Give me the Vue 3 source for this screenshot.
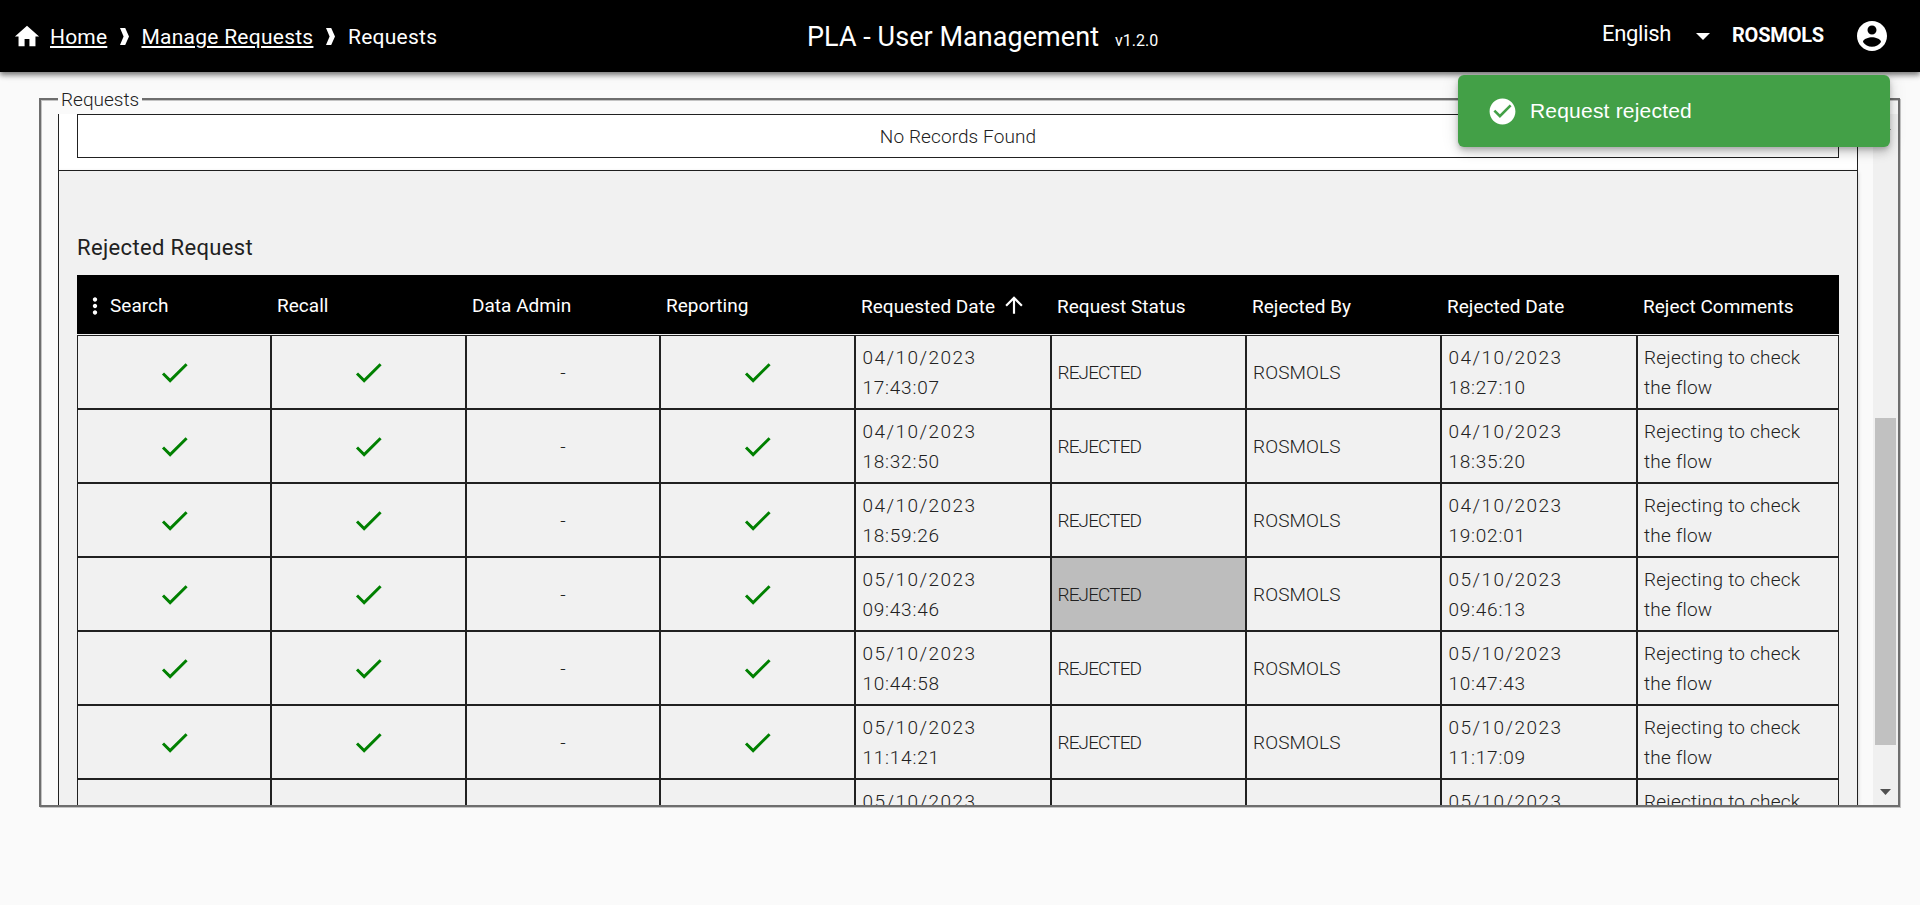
<script setup>
const columns = ['Search', 'Recall', 'Data Admin', 'Reporting', 'Requested Date', 'Request Status', 'Rejected By', 'Rejected Date', 'Reject Comments']
const rows = [
  ['04/10/2023', '17:43:07', '04/10/2023', '18:27:10'],
  ['04/10/2023', '18:32:50', '04/10/2023', '18:35:20'],
  ['04/10/2023', '18:59:26', '04/10/2023', '19:02:01'],
  ['05/10/2023', '09:43:46', '05/10/2023', '09:46:13'],
  ['05/10/2023', '10:44:58', '05/10/2023', '10:47:43'],
  ['05/10/2023', '11:14:21', '05/10/2023', '11:17:09'],
  ['05/10/2023', '11:20:35', '05/10/2023', '11:24:52'],
]
const access = [true, true, false, true]
const selectedRow = 3
</script>

<template>
  <div class="page">
    <header class="bar">
      <nav class="crumbs">
        <svg class="home" viewBox="0 0 24 24"><path d="M10 20v-6h4v6h5v-8h3L12 3 2 12h3v8z" /></svg>
        <a class="link first">Home</a>
        <svg class="sep" viewBox="0 0 9 17"><path d="M0 0h5.2L9 8.5 5.2 17H0l3.6-8.5z" /></svg>
        <a class="link second">Manage Requests</a>
        <svg class="sep" viewBox="0 0 9 17"><path d="M0 0h5.2L9 8.5 5.2 17H0l3.6-8.5z" /></svg>
        <span class="current">Requests</span>
      </nav>
      <div class="brand"><span class="title">PLA - User Management</span><span class="version">v1.2.0</span></div>
      <div class="account">
        <span class="lang">English</span>
        <svg class="caret" viewBox="0 0 14 7"><path d="M0 0h14L7 7z" /></svg>
        <span class="user">ROSMOLS</span>
        <svg class="avatar" viewBox="0 0 24 24"><path d="M12 2C6.48 2 2 6.48 2 12s4.48 10 10 10 10-4.48 10-10S17.52 2 12 2zm0 3c1.66 0 3 1.34 3 3s-1.34 3-3 3-3-1.34-3-3 1.34-3 3-3zm0 14.2c-2.5 0-4.71-1.28-6-3.22.03-1.99 4-3.08 6-3.08 1.99 0 5.97 1.09 6 3.08-1.29 1.94-3.5 3.22-6 3.22z" /></svg>
      </div>
    </header>

    <section class="frame">
      <span class="legend">Requests</span>
      <div class="content">
        <div class="panel empty">
          <div class="none"><span>No Records Found</span></div>
        </div>
        <div class="panel rejected">
          <h2>Rejected Request</h2>
          <div class="grid head">
            <div v-for="(c, i) in columns" :key="c" class="th" :class="{ low: i > 3 }">
              <svg v-if="i === 0" class="dots" viewBox="0 0 24 24"><path d="M12 8c1.1 0 2-.9 2-2s-.9-2-2-2-2 .9-2 2 .9 2 2 2zm0 2c-1.1 0-2 .9-2 2s.9 2 2 2 2-.9 2-2-.9-2-2-2zm0 6c-1.1 0-2 .9-2 2s.9 2 2 2 2-.9 2-2-.9-2-2-2z" /></svg>
              <span>{{ c }}</span>
              <svg v-if="i === 4" class="sort" viewBox="0 0 24 24"><path d="m4 12 1.41 1.41L11 7.83V20h2V7.83l5.58 5.59L20 12l-8-8-8 8z" /></svg>
            </div>
          </div>
          <div v-for="(r, n) in rows" :key="n" class="grid row">
            <div v-for="(a, i) in access" :key="i" class="td mid">
              <svg v-if="a" class="check" viewBox="0 0 24 24"><path d="M9 16.17 4.83 12l-1.42 1.41L9 19 21 7l-1.41-1.41z" /></svg>
              <span v-else class="dash">-</span>
            </div>
            <div class="td date"><span>{{ r[0] }}</span><span class="time">{{ r[1] }}</span></div>
            <div class="td status" :class="{ selected: n === selectedRow }"><span>REJECTED</span></div>
            <div class="td by"><span>ROSMOLS</span></div>
            <div class="td date"><span>{{ r[2] }}</span><span class="time">{{ r[3] }}</span></div>
            <div class="td note"><span>Rejecting to check</span><span>the flow</span></div>
          </div>
        </div>
      </div>
      <div class="track">
        <svg class="tri" viewBox="0 0 11 6"><path d="M0 6h11L5.5 0z" /></svg>
        <div class="thumb"></div>
        <svg class="tri" viewBox="0 0 11 6"><path d="M0 0h11L5.5 6z" /></svg>
      </div>
    </section>

    <div class="toast">
      <svg viewBox="0 0 24 24"><path d="M12 2C6.48 2 2 6.48 2 12s4.48 10 10 10 10-4.48 10-10S17.52 2 12 2zm-2 15-5-5 1.41-1.41L10 14.17l7.59-7.59L19 8l-9 9z" /></svg>
      <span>Request rejected</span>
    </div>
  </div>
</template>

<style>
body { background: #fafafa; overflow: hidden; }
</style>

<style scoped>
.page { position: relative; height: 905px; background: #fafafa; font-family: Roboto, "Liberation Sans", sans-serif; color: #212121; white-space: nowrap; }
.page * { box-sizing: border-box; }
svg { display: block; flex: none; fill: currentColor; }

.bar { position: relative; display: flex; align-items: center; justify-content: space-between; height: 72px; background: #000; color: #fff; box-shadow: 0 2px 4px -1px rgba(0,0,0,.2), 0 4px 5px rgba(0,0,0,.14), 0 1px 10px rgba(0,0,0,.12), 0 3px 5px rgba(0,0,0,.25); }
.crumbs { display: flex; align-items: center; width: 807px; padding-left: 12px; font-size: 21px; line-height: 30px; }
.home { width: 30px; height: 29px; margin-right: 8px; }
.link { padding-top: 1px; text-decoration: underline; text-decoration-thickness: 2px; text-underline-offset: 2px; }
.first { width: 57px; letter-spacing: .2px; }
.second { width: 171px; letter-spacing: .25px; }
.sep { width: 9px; height: 17px; margin: 0 12.5px 0 13px; }
.current { padding: 1px 0 0 1px; letter-spacing: .25px; }
.brand { display: flex; align-items: baseline; flex: 1; padding-top: 1px; }
.title { width: 308px; font-size: 27px; letter-spacing: .05px; }
.version { font-size: 16px; }
.account { display: flex; align-items: center; width: 318px; }
.lang { width: 94px; font-size: 22px; letter-spacing: -.3px; margin-top: -5px; }
.caret { width: 14px; height: 7px; margin-top: 1px; }
.user { width: 122px; margin: -2px 0 0 22px; font-size: 20px; font-weight: 700; letter-spacing: -.2px; }
.avatar { width: 36px; height: 36px; }

.frame { position: relative; display: flex; width: 1861px; height: 709px; margin: 26px 0 0 39px; padding: 14px 0 0 17px; border: 2px solid #6e6e6e; box-shadow: inset 1px 1px 0 #c3c3c3, 1px 1px 0 #c3c3c3; }
.legend { position: absolute; left: 17px; top: -14px; width: 84px; padding-left: 3px; background: #fafafa; font-size: 19px; line-height: 28px; font-weight: 300; letter-spacing: 0; }
.content { width: 1815px; height: 691px; overflow: hidden; }
.panel { width: 1800px; padding: 0 18px; border: 1px solid #212121; border-top: 0; box-shadow: 0 1px 4px rgba(0,0,0,.2); }
.empty { height: 57px; background: #fff; box-shadow: none; }
.none { display: flex; align-items: center; justify-content: center; height: 44px; border: 1px solid #212121; font-size: 19px; font-weight: 300; letter-spacing: .1px; }
.rejected { height: 760px; padding-top: 57px; background: #f1f1f1; }
h2 { height: 47px; margin: 0; font-size: 22px; line-height: 40px; font-weight: 400; letter-spacing: .35px; }
.grid { display: grid; grid-template-columns: 194px 195px 194px 195px 196px 195px 195px 196px 202px; width: 1762px; }
.head { height: 59px; margin-bottom: 1px; background: #000; color: #fff; }
.th { display: flex; align-items: center; padding: 1px 0 0 6px; font-size: 19px; letter-spacing: .02px; }
.low { padding-top: 3px; }
.dots { width: 26px; height: 26px; margin: 1px 2px 0 -1px; }
.sort { width: 26px; height: 26px; margin: -3px 0 0 6px; }
.row { height: 74px; font-size: 19px; font-weight: 300; line-height: 30px; }
.td { display: flex; flex-direction: column; justify-content: center; padding: 2px 0 0 6px; border: 1px solid #212121; }
.mid { align-items: center; padding: 0; }
.check { width: 35px; height: 35px; color: #008000; }
.dash { padding-top: 1px; }
.date { padding-left: 6.5px; letter-spacing: 1.45px; }
.time { letter-spacing: .75px; }
.note { letter-spacing: .23px; }
.status { padding-left: 5.5px; letter-spacing: -.9px; }
.by { letter-spacing: .1px; }
.selected { background: #bdbdbd; }
.track { display: flex; flex-direction: column; align-items: center; width: 25px; height: 691px; padding: 10px 0; background: #f0f0f0; }
.tri { width: 11px; height: 6px; color: #505050; }
.thumb { width: 21px; height: 327px; margin: 288px 0 44px -1px; background: #c1c1c1; }

.toast { position: absolute; top: 75px; left: 1458px; display: flex; align-items: center; width: 432px; height: 72px; padding-left: 29px; border-radius: 6px; background: #43a047; color: #fff; font: 21px "Liberation Sans", Arial, sans-serif; box-shadow: 0 3px 5px -1px rgba(0,0,0,.2), 0 6px 10px rgba(0,0,0,.14), 0 1px 18px rgba(0,0,0,.12); }
.toast svg { width: 31px; height: 31px; margin-right: 12px; }
.toast span { letter-spacing: .2px; margin-top: -1px; }
</style>
